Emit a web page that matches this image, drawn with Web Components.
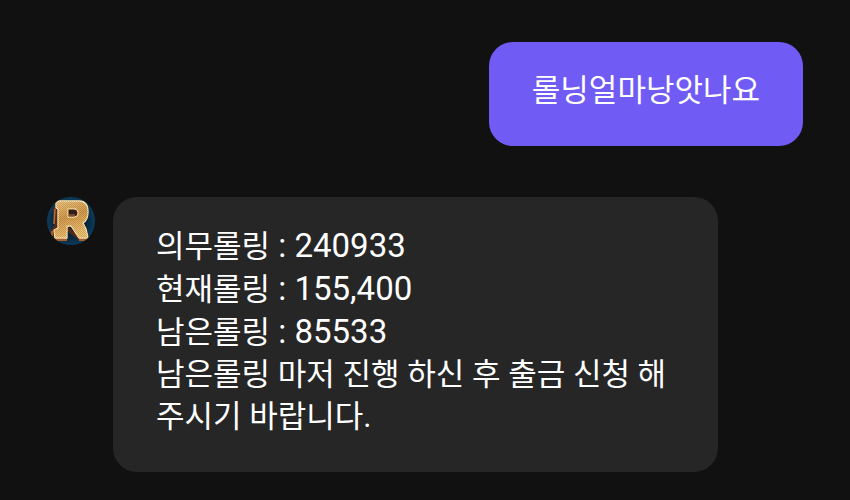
<!DOCTYPE html>
<html lang="ko">
<head>
<meta charset="utf-8">
<meta name="viewport" content="width=device-width, initial-scale=1">
<title>채팅</title>
<style>
    body {
        margin: 0;
        background: #111;
    }
</style>
</head>
<body>

<chat-thread>
    <chat-message sent>
        <chat-line>롤닝얼마낭앗나요</chat-line>
    </chat-message>
    <chat-message>
        <chat-avatar slot="avatar"></chat-avatar>
        <chat-line value="240933">의무롤링</chat-line>
        <chat-line value="155,400">현재롤링</chat-line>
        <chat-line value="85533">남은롤링</chat-line>
        <chat-line>남은롤링 마저 진행 하신 후 출금 신청 해 주시기 바랍니다.</chat-line>
    </chat-message>
</chat-thread>

<script>
const html = String.raw;

/**
 * The scrolling list of messages.
 *
 * @slot - The chat-message elements, oldest first
 */
class ChatThread extends HTMLElement {
    constructor() {
        super();
        this.attachShadow({ mode: 'open' });
    }

    connectedCallback() {
        this.shadowRoot.innerHTML = html`
            <style>
                :host {
                    display: block;
                    color: #fff;
                    font: 31px/42px Roboto, "Noto Sans CJK KR", sans-serif;
                }

                main {
                    display: flex;
                    flex-direction: column;
                    gap: 51px;
                    padding: 42px 47px 28px;
                }
            </style>

            <main><slot></slot></main>
        `;
    }
}

/**
 * A message bubble with an optional avatar beside it.
 *
 * @attribute {boolean} sent - Align to the right, in the accent colour
 *
 * @slot - The lines of the message
 * @slot avatar - The picture of the sender
 */
class ChatMessage extends HTMLElement {
    constructor() {
        super();
        this.attachShadow({ mode: 'open' });
    }

    connectedCallback() {
        this.shadowRoot.innerHTML = html`
            <style>
                :host {
                    --ChatMessage-background: #262626;

                    display: flex;
                    align-items: flex-start;
                    gap: 18px;
                }

                :host([sent]) {
                    --ChatMessage-background: #715bf5;

                    justify-content: flex-end;
                }

                .Bubble {
                    box-sizing: border-box;
                    max-width: 80%;
                    padding: 28px 43px 34px;
                    border-radius: 24px;
                    background: var(--ChatMessage-background);
                }
            </style>

            <slot name="avatar"></slot>
            <div class="Bubble"><slot></slot></div>
        `;
    }
}

/**
 * One paragraph of a message.
 *
 * @attribute {string} value - An amount shown after the label
 *
 * @slot - The text or label
 */
class ChatLine extends HTMLElement {
    constructor() {
        super();
        this.attachShadow({ mode: 'open' });
    }

    connectedCallback() {
        this.shadowRoot.innerHTML = html`
            <style>
                :host {
                    display: block;
                }

                .Value {
                    font-size: 33px;
                }
            </style>

            <slot></slot><span class="Value" hidden></span>
        `;

        if (this.hasAttribute('value')) {
            const valueEl = this.shadowRoot.querySelector('.Value');
            valueEl.textContent = ` : ${this.getAttribute('value')}`;
            valueEl.hidden = false;
        }
    }
}

/**
 * The round gold emblem of the operator.
 */
class ChatAvatar extends HTMLElement {
    constructor() {
        super();
        this.attachShadow({ mode: 'open' });
    }

    connectedCallback() {
        this.shadowRoot.innerHTML = html`
            <style>
                :host {
                    display: block;
                    flex: none;
                    width: 48px;
                    height: 48px;
                    border-radius: 50%;
                    overflow: hidden;
                }

                svg {
                    display: block;
                }
            </style>

            <svg width="48" height="48" viewBox="0 0 48 48" role="img" aria-label="R">
                <defs>
                    <radialGradient id="back">
                        <stop offset="0" stop-color="#071522"/>
                        <stop offset=".75" stop-color="#092a42"/>
                        <stop offset="1" stop-color="#0c3c5c"/>
                    </radialGradient>
                    <linearGradient id="gold" x1="0" y1="0" x2=".3" y2="1">
                        <stop offset="0" stop-color="#f0cf8c"/>
                        <stop offset=".5" stop-color="#cf9a4c"/>
                        <stop offset="1" stop-color="#f0c778"/>
                    </linearGradient>
                    <pattern id="grain" width="2" height="2" patternUnits="userSpaceOnUse">
                        <path d="M0 0H1V1H0ZM1 1H2V2H1Z" fill="#a36a2c" opacity=".4"/>
                    </pattern>
                </defs>
                <rect width="48" height="48" fill="url(#back)"/>
                <path d="M10 5L6 12L7 28L3 35L6 42H20V34L32 43H40L41 41L31 39L22 30V12Z" fill="#54291a"/>
                <path d="M8 12L7 27M5 34L5 39" stroke="#b96e35" stroke-width="1.5"/>
                <path d="M7 43H19V41M32 43H40" fill="none" stroke="#a75e24" stroke-width="2"/>
                <g fill-rule="evenodd" stroke-linejoin="round">
                    <path fill="url(#gold)" stroke="#ffe8b5" stroke-width="1.3" d="M11 4H32Q41 4 41 15Q41 23 36 26L39 32L41 41H32L24 29H20V41H8L7 33L11 31V12L9 11V5ZM21 12V20H27Q31 20 31 16Q31 12 27 12Z"/>
                    <path fill="url(#grain)" d="M11 4H32Q41 4 41 15Q41 23 36 26L39 32L41 41H32L24 29H20V41H8L7 33L11 31V12L9 11V5ZM21 12V20H27Q31 20 31 16Q31 12 27 12Z"/>
                </g>
                <path d="M21 12H27Q31 12 31 16Q31 20 27 20H21Z" fill="#321c1c" stroke="#f5cd86"/>
                <path d="M22 18H28" stroke="#925a2c" stroke-width="1.5"/>
            </svg>
        `;
    }
}

customElements.define('chat-thread', ChatThread);
customElements.define('chat-message', ChatMessage);
customElements.define('chat-line', ChatLine);
customElements.define('chat-avatar', ChatAvatar);
</script>

</body>
</html>
